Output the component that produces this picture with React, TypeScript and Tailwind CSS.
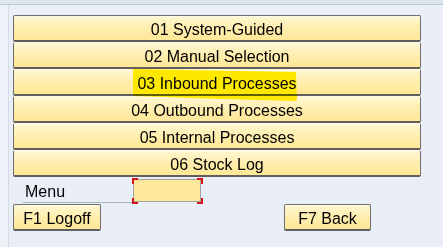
import React from "react";

const items = [
  "01 System-Guided",
  "02 Manual Selection",
  "03 Inbound Processes",
  "04 Outbound Processes",
  "05 Internal Processes",
  "06 Stock Log",
];

function Btn({ label, className }: { label: string; className?: string }) {
  return (
    <div
      className={
        "flex items-center justify-center h-[27px] pt-[4px] rounded-[2px] border border-[#6e6e6e] border-b-2 border-b-[#5f5f5f] bg-gradient-to-b from-[#fff7d2] via-[#ffeeae] to-[#ffe797] text-[16px] leading-none text-black shadow-[inset_0_1px_0_#fffbe9] " +
        (className ?? "")
      }
    >
      {label}
    </div>
  );
}

export default function App() {
  return (
    <div
      className="relative isolate flex flex-col w-[443px] h-[247px] overflow-hidden bg-[#e9eef7] text-black"
      style={{ fontFamily: '"Liberation Sans", Arial, sans-serif' }}
    >
      <div className="h-[5px] bg-[#dde5ef] border-b border-[#b9c6d4]" />
      <div className="flex flex-1">
        <div className="w-[9px] bg-[#eef2f8] border-r border-[#d3dbe6]" />
        <div className="flex flex-col pl-[4px] pt-[10px]">
          <div className="flex flex-col w-[408px]">
            {items.map((t, i) => (
              <Btn key={t} label={t} className={i > 0 ? "border-t-[#fff6d6]" : ""} />
            ))}
          </div>
          <div className="flex items-center h-[27px]">
            <div className="ml-[10px] w-[110px] h-[25px] flex items-center pl-[2px] pt-[3px] border-b border-[#aab4c0] text-[16px] leading-none">
              Menu
            </div>
            <div className="relative w-[68px] h-[23px] mt-[-1px] bg-[#fde89b] border border-[#a3a3a3]">
              <span className="absolute left-[-2px] top-[-2px] w-[6px] h-[2px] bg-[#d61616]" />
              <span className="absolute left-[-2px] top-[-2px] w-[2px] h-[6px] bg-[#d61616]" />
              <span className="absolute right-[-3px] top-[-2px] w-[6px] h-[2px] bg-[#d61616]" />
              <span className="absolute right-[-3px] top-[-2px] w-[2px] h-[6px] bg-[#d61616]" />
              <span className="absolute left-[-2px] bottom-[-3px] w-[6px] h-[2px] bg-[#d61616]" />
              <span className="absolute left-[-2px] bottom-[-3px] w-[2px] h-[6px] bg-[#d61616]" />
              <span className="absolute right-[-3px] bottom-[-3px] w-[6px] h-[2px] bg-[#d61616]" />
              <span className="absolute right-[-3px] bottom-[-3px] w-[2px] h-[6px] bg-[#d61616]" />
            </div>
          </div>
          <div className="flex">
            <Btn label="F1 Logoff" className="w-[88px]" />
            <Btn label="F7 Back" className="w-[87px] ml-[183px]" />
          </div>
        </div>
      </div>
      <svg
        className="pointer-events-none absolute inset-0 mix-blend-darken"
        width="443"
        height="247"
        viewBox="0 0 443 247"
      >
        <path
          d="M133 69 L296 72 L297 99 Q297 101 294 101 L220 99 L133 96 Z"
          fill="#ffe800"
        />
      </svg>
    </div>
  );
}
